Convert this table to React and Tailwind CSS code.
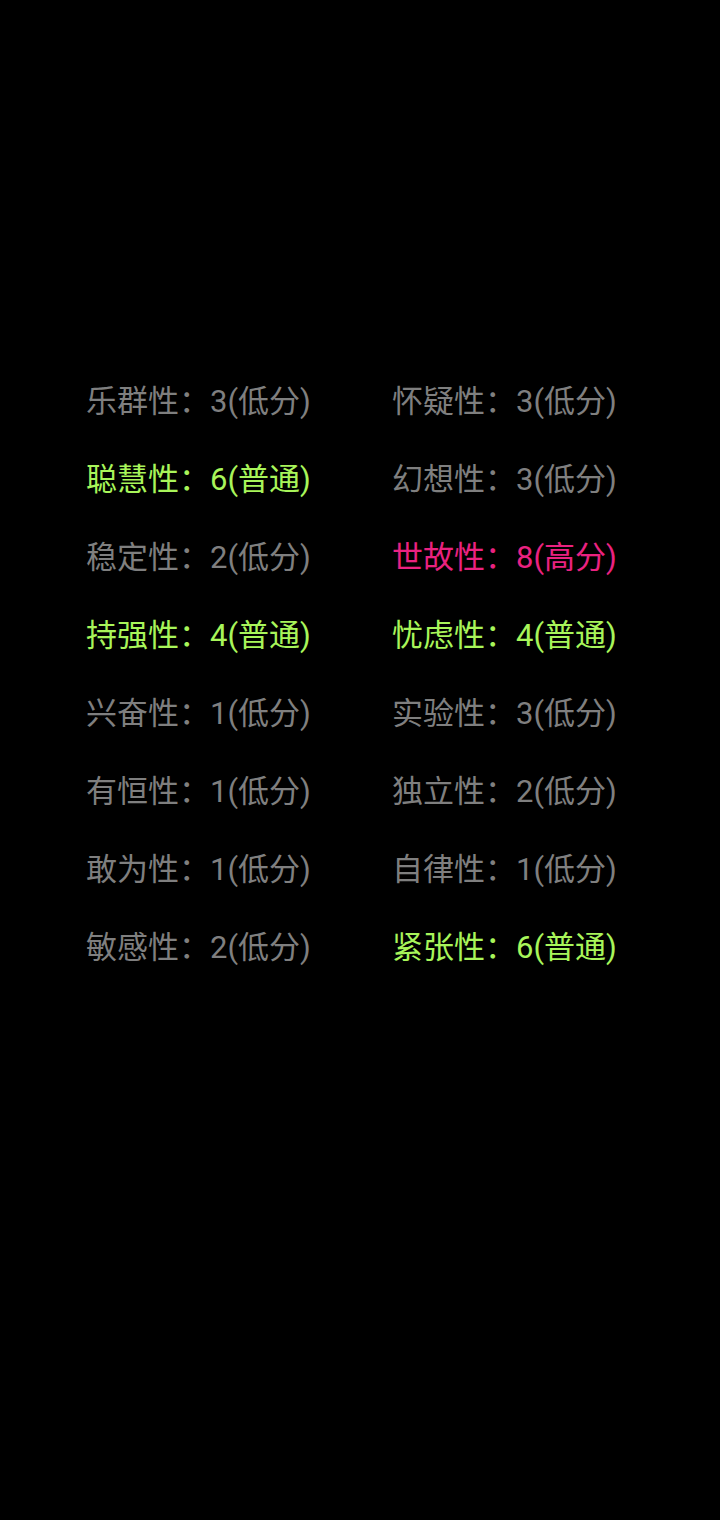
const rows = [
  [["乐群性：3(低分)", "low"], ["怀疑性：3(低分)", "low"]],
  [["聪慧性：6(普通)", "mid"], ["幻想性：3(低分)", "low"]],
  [["稳定性：2(低分)", "low"], ["世故性：8(高分)", "high"]],
  [["持强性：4(普通)", "mid"], ["忧虑性：4(普通)", "mid"]],
  [["兴奋性：1(低分)", "low"], ["实验性：3(低分)", "low"]],
  [["有恒性：1(低分)", "low"], ["独立性：2(低分)", "low"]],
  [["敢为性：1(低分)", "low"], ["自律性：1(低分)", "low"]],
  [["敏感性：2(低分)", "low"], ["紧张性：6(普通)", "mid"]],
];

const colors = {
  low: "text-[#7f7f7f]",
  mid: "text-[#a8f55a]",
  high: "text-[#ea2280]",
};

export default function App() {
  return (
    <div
      className="min-h-[1520px] w-[720px] bg-black pt-[362px] pl-[86px]"
      style={{ fontFamily: "Roboto, 'Noto Sans CJK SC', sans-serif" }}
    >
      {rows.map((row, i) => (
        <div key={i} className="flex h-[78px] items-center">
          {row.map(([text, level], j) => (
            <div
              key={j}
              className={`${j === 0 ? "w-[306px]" : ""} text-[31px] leading-none whitespace-nowrap ${colors[level]}`}
            >
              {text}
            </div>
          ))}
        </div>
      ))}
    </div>
  );
}
